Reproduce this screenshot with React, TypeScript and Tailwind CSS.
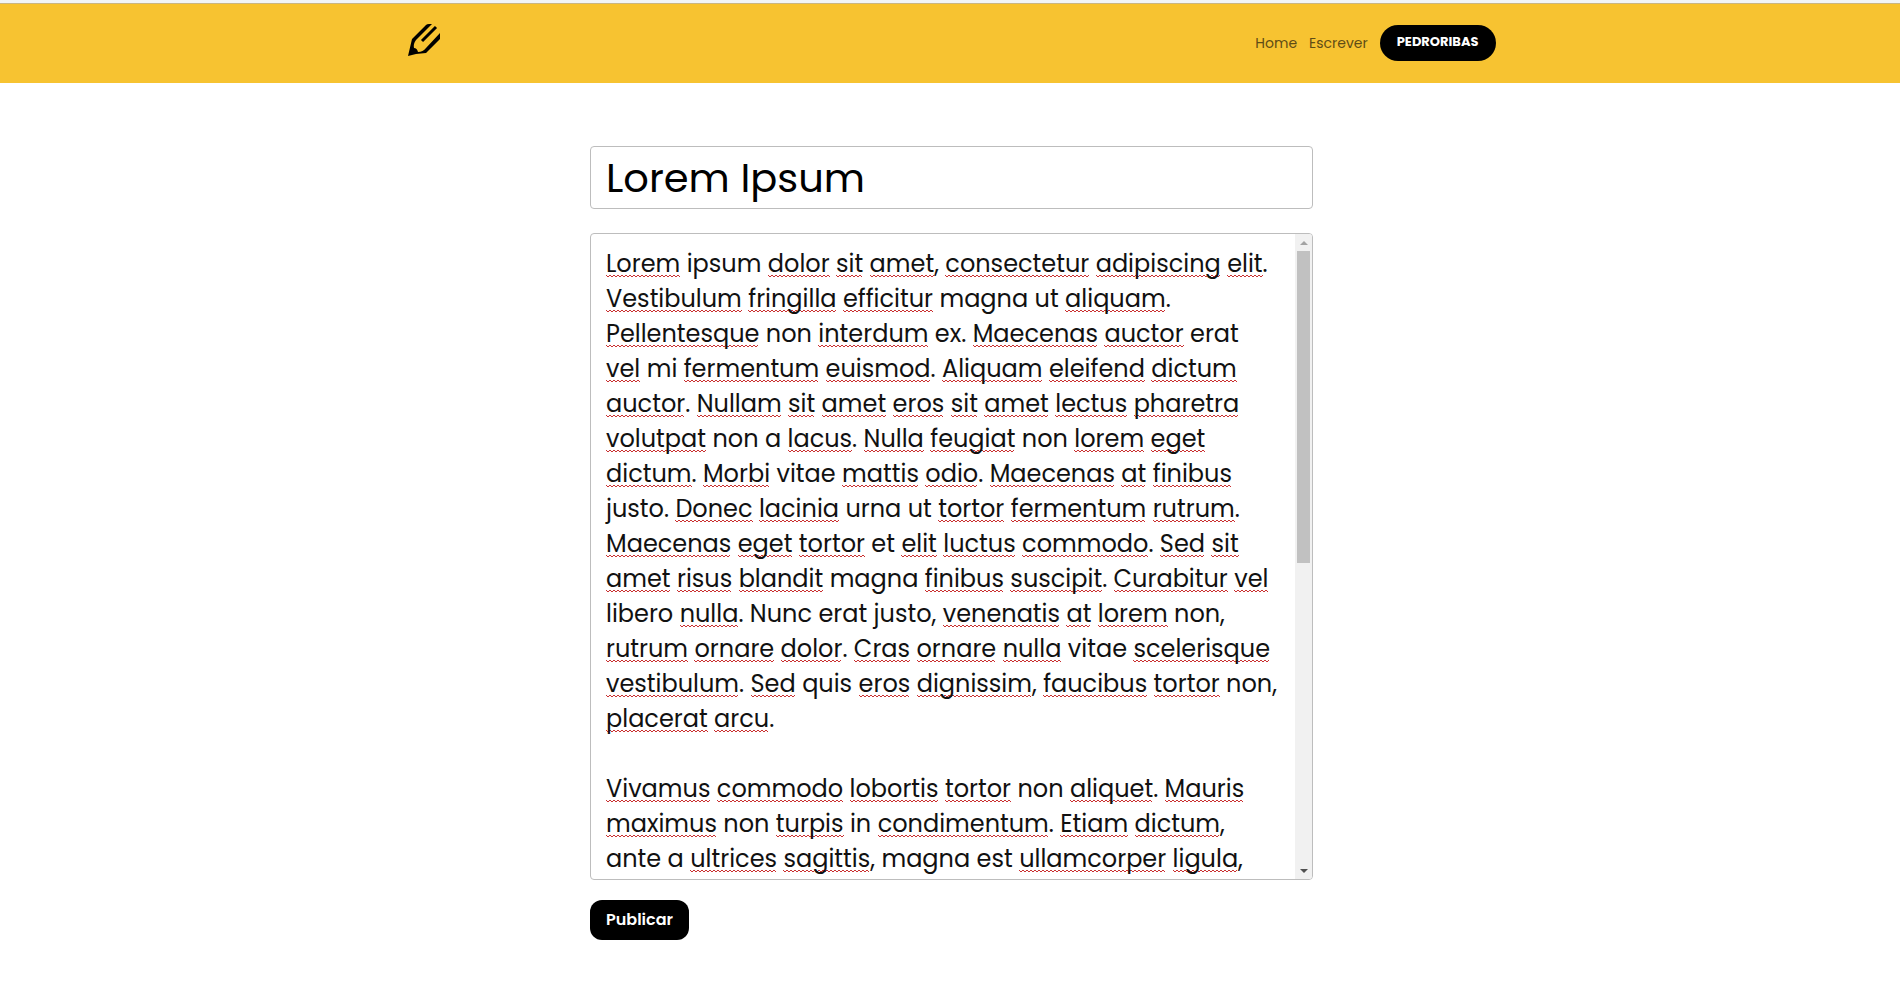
import React, { useRef, useState } from "react";

const LINES: string[] = [
  "_Lorem_ ipsum _dolor_ _sit_ _amet_, _consectetur_ _adipiscing_ _elit_.",
  "_Vestibulum_ _fringilla_ _efficitur_ magna ut _aliquam_.",
  "_Pellentesque_ non _interdum_ ex. _Maecenas_ _auctor_ erat",
  "_vel_ mi _fermentum_ _euismod_. _Aliquam_ _eleifend_ _dictum_",
  "_auctor_. _Nullam_ _sit_ _amet_ _eros_ _sit_ _amet_ _lectus_ _pharetra_",
  "_volutpat_ non a _lacus_. _Nulla_ _feugiat_ non _lorem_ _eget_",
  "_dictum_. _Morbi_ vitae _mattis_ _odio_. _Maecenas_ _at_ _finibus_",
  "justo. _Donec_ _lacinia_ urna ut _tortor_ _fermentum_ _rutrum_.",
  "_Maecenas_ _eget_ _tortor_ et _elit_ _luctus_ _commodo_. _Sed_ _sit_",
  "_amet_ _risus_ _blandit_ magna _finibus_ _suscipit_. _Curabitur_ _vel_",
  "libero _nulla_. Nunc erat justo, _venenatis_ _at_ _lorem_ non,",
  "_rutrum_ _ornare_ _dolor_. _Cras_ _ornare_ _nulla_ vitae _scelerisque_",
  "_vestibulum_. _Sed_ quis _eros_ _dignissim_, _faucibus_ _tortor_ non,",
  "_placerat_ _arcu_.",
  "",
  "_Vivamus_ _commodo_ _lobortis_ _tortor_ non _aliquet_. _Mauris_",
  "_maximus_ non _turpis_ in _condimentum_. _Etiam_ _dictum_,",
  "ante a _ultrices_ _sagittis_, magna est _ullamcorper_ _ligula_,",
];

const BODY = LINES.join("\n").replace(/_/g, "");
const LINE_HEIGHT = 35;

/* One zigzag per flagged word, placed from the measured width of the text before it. */
function squiggles(): string[] {
  const ctx = document.createElement("canvas").getContext("2d");
  if (!ctx) return [];
  ctx.font = "24px Poppins, Inter, sans-serif";
  const paths: string[] = [];
  LINES.forEach((line, row) => {
    let before = "";
    line.split("_").forEach((part, i) => {
      if (i % 2) {
        const start = Math.round(ctx.measureText(before).width);
        const end = Math.round(ctx.measureText(before + part).width);
        const y = row * LINE_HEIGHT + 29;
        let d = `M${start} ${y}`;
        for (let x = start + 2, k = 1; x <= end; x += 2, k++) d += `L${x} ${y + (k % 2) * 2}`;
        paths.push(d);
      }
      before += part;
    });
  });
  return paths;
}

function Logo() {
  return (
    <svg viewBox="0 0 32 32" className="size-8" aria-hidden="true">
      <path
        fillRule="evenodd"
        d="M0 32 4 15 18 1Q19 0 21 0H24L8 16Q5 20 6 24Q9 24 10 28Q15 28 18 24L32 9V15L18 29 8 30Z"
        fill="#000"
      />
      <path d="M28 3 14 17" stroke="#000" strokeWidth="3" />
    </svg>
  );
}

function Header() {
  return (
    <header className="border-t-[3px] border-slate-100 bg-[#f7c331]">
      <div className="border-t border-[#c9b684] pl-[19px] pr-4">
        <div className="mx-auto flex h-[79px] max-w-[1088px] items-center justify-between">
          <a href="#" aria-label="Blog" className="mb-2">
            <Logo />
          </a>
          <nav className="mb-0.5 flex items-center gap-3 text-sm text-[#5f4c16]">
            <a href="#home">Home</a>
            <a href="#escrever">Escrever</a>
            <button type="button" className="h-9 rounded-full bg-black px-[17px] text-[13px] font-bold text-white">
              PEDRORIBAS
            </button>
          </nav>
        </div>
      </div>
    </header>
  );
}

/* The textarea takes the typing; the layer under it shows the text with its spelling marks. */
function Editor() {
  const area = useRef<HTMLTextAreaElement>(null);
  const layer = useRef<HTMLDivElement>(null);
  const [text, setText] = useState(BODY);
  const [marks] = useState(squiggles);
  const scroll = (dy: number) => area.current?.scrollBy({ top: dy });

  return (
    <div className="flex h-[647px] overflow-hidden rounded border border-[#bdbdbd]">
      <div className="relative min-w-0 flex-1">
        <div
          ref={layer}
          aria-hidden="true"
          className="absolute inset-0 overflow-hidden px-[15px] pt-3 text-2xl leading-[35px] text-[#111]"
        >
          <div className="relative">
            {text === BODY && (
              <svg className="absolute inset-0 size-full overflow-visible" fill="none" stroke="#c93030" strokeWidth="1">
                {marks.map((d) => (
                  <path key={d} d={d} />
                ))}
              </svg>
            )}
            {text.split("\n").map((line, i) => (
              <p key={i} className="relative min-h-[35px] whitespace-pre-wrap break-words">
                {line}
              </p>
            ))}
          </div>
        </div>
        <textarea
          ref={area}
          aria-label="Texto"
          spellCheck={false}
          value={text}
          onChange={(e) => setText(e.target.value)}
          onScroll={(e) => {
            if (layer.current) layer.current.scrollTop = e.currentTarget.scrollTop;
          }}
          className="relative block size-full resize-none bg-transparent px-[15px] pt-3 text-2xl leading-[35px] text-transparent caret-black outline-none [scrollbar-width:none]"
        />
      </div>
      <div className="flex w-[17px] shrink-0 flex-col bg-[#f1f1f1]">
        <button type="button" aria-label="Rolar para cima" onClick={() => scroll(-LINE_HEIGHT)} className="flex h-[17px] items-center justify-center">
          <svg viewBox="0 0 8 4" className="h-1 w-2">
            <path d="M0 4 4 0 8 4Z" fill="#a3a3a3" />
          </svg>
        </button>
        <div className="flex-1 px-[2px]">
          <div className="h-[51%] bg-[#c1c1c1]" />
        </div>
        <button type="button" aria-label="Rolar para baixo" onClick={() => scroll(LINE_HEIGHT)} className="flex h-[17px] items-center justify-center">
          <svg viewBox="0 0 8 4" className="h-1 w-2">
            <path d="M0 0 4 4 8 0Z" fill="#505050" />
          </svg>
        </button>
      </div>
    </div>
  );
}

export default function App() {
  return (
    <div className="min-h-screen bg-white font-['Poppins',Inter,sans-serif] text-black">
      <Header />
      <main className="pl-[19px] pr-4 pt-[63px]">
        <form className="mx-auto max-w-[723px]" onSubmit={(e) => e.preventDefault()}>
          <input
            type="text"
            aria-label="Título"
            defaultValue="Lorem Ipsum"
            className="block h-[63px] w-full rounded border border-[#bdbdbd] px-[15px] text-[40px] outline-none"
          />
          <div className="mt-6">
            <Editor />
          </div>
          <button type="submit" className="mt-5 h-10 rounded-xl bg-black px-4 text-base font-semibold text-white">
            Publicar
          </button>
        </form>
      </main>
    </div>
  );
}
